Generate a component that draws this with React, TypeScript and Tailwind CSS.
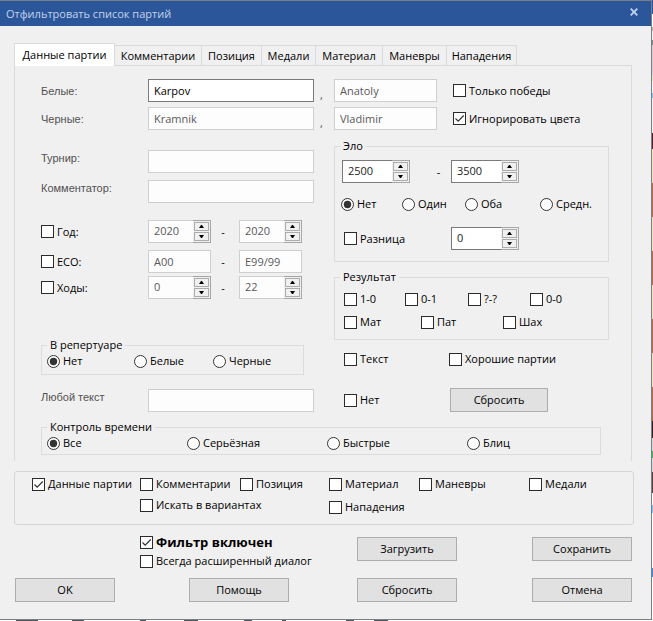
import type { ReactNode } from 'react';

interface CheckProps {
  label: string;
  checked?: boolean;
  bold?: boolean;
}

function Check({ label, checked, bold }: CheckProps) {
  return (
    <label className="flex items-center gap-[3px] h-[18px] whitespace-nowrap">
      <span className="grid shrink-0">
        <input
          type="checkbox"
          defaultChecked={ checked }
          className="peer col-start-1 row-start-1 appearance-none size-[13px] border border-[#2b2b2b] bg-white"
        />
        <svg viewBox="0 0 13 13" className="col-start-1 row-start-1 size-[13px] invisible peer-checked:visible pointer-events-none">
          <path d="M2.5 6.5 L5.2 9.2 L10.7 3.5" fill="none" stroke="#333" strokeWidth="1.2" />
        </svg>
      </span>
      <span className={ bold ? 'text-[13px] font-bold' : '' }>{ label }</span>
    </label>
  );
}

interface RadioProps {
  name: string;
  label: string;
  checked?: boolean;
}

function Radio({ name, label, checked }: RadioProps) {
  return (
    <label className="flex items-center gap-[3px] h-[18px] whitespace-nowrap">
      <span className="grid shrink-0">
        <input
          type="radio"
          name={ name }
          defaultChecked={ checked }
          className="peer col-start-1 row-start-1 appearance-none size-[13px] rounded-full border border-[#333] bg-white"
        />
        <svg viewBox="0 0 13 13" className="col-start-1 row-start-1 size-[13px] invisible peer-checked:visible pointer-events-none">
          <circle cx="6.5" cy="6.5" r="3.7" fill="#333" />
        </svg>
      </span>
      <span>{ label }</span>
    </label>
  );
}

interface FieldProps {
  id?: string;
  label?: string;
  value?: string;
  active?: boolean;
  className?: string;
}

function Field({ id, label, value = '', active, className = '' }: FieldProps) {
  return (
    <input
      id={ id }
      type="text"
      aria-label={ label }
      defaultValue={ value }
      className={ `h-[23px] min-w-0 border px-[5px] pb-px outline-none ${active ? 'border-[#7a7a7a] bg-white text-black' : 'border-[#cfcfcf] bg-[#fdfdfd] text-[#5a5a5a]'} ${className}` }
    />
  );
}

function Spinner({ label, value, active }: FieldProps) {
  return (
    <div className={ `flex h-[23px] ${active ? 'w-[68px]' : 'w-[63px]'}` }>
      <input
        type="text"
        aria-label={ label }
        defaultValue={ value }
        className={ `w-0 flex-1 border border-r-0 px-[5px] pb-px outline-none ${active ? 'border-[#7a7a7a] bg-white text-[#222]' : 'border-[#cfcfcf] bg-[#fdfdfd] text-[#5a5a5a]'}` }
      />
      <div className="flex flex-col w-[18px] gap-px p-px border-y border-r border-[#a6a6a6] bg-[#f0f0f0]">
        <button type="button" aria-label={ `${label} +` } className="flex-1 flex items-center justify-center border border-[#acacac] bg-[#f0f0f0]">
          <svg viewBox="0 0 5 3" className="w-[5px] h-[3px]"><path d="M0 3 L2 0 H3 L5 3 Z" /></svg>
        </button>
        <button type="button" aria-label={ `${label} -` } className="flex-1 flex items-center justify-center border border-[#acacac] bg-[#f0f0f0]">
          <svg viewBox="0 0 5 3" className="w-[5px] h-[3px]"><path d="M0 0 L2 3 H3 L5 0 Z" /></svg>
        </button>
      </div>
    </div>
  );
}

interface LabeledProps {
  id: string;
  label: string;
  value?: string;
  active?: boolean;
  top?: boolean;
}

function LabeledField({ id, label, value, active, top }: LabeledProps) {
  return (
    <div className={ `flex ${top ? 'items-start' : 'items-center'}` }>
      <label htmlFor={ id } className="w-[107px] shrink-0 leading-4 font-['Liberation_Sans',sans-serif] text-[#505050]">{ label }</label>
      <Field id={ id } value={ value } active={ active } className="flex-1" />
    </div>
  );
}

function Group({ title, className = '', children }: { title: string; className?: string; children: ReactNode }) {
  return (
    <fieldset className={ `min-w-0 border border-[#dcdcdc] px-[5px] ${className}` }>
      <legend className="h-[18px] leading-[18px] px-[3px]">{ title }</legend>
      { children }
    </fieldset>
  );
}

function Button({ className = 'w-[100px]', children }: { className?: string; children: ReactNode }) {
  return (
    <button type="button" className={ `h-6 border border-[#adadad] bg-[#e1e1e1] ${className}` }>{ children }</button>
  );
}

const tabs = [
  { title: 'Комментарии', width: 'w-[87px]' },
  { title: 'Позиция', width: 'w-[60px]' },
  { title: 'Медали', width: 'w-[54px]' },
  { title: 'Материал', width: 'w-[67px]' },
  { title: 'Маневры', width: 'w-16' },
  { title: 'Нападения', width: 'w-[70px]' },
];

// slivers of the main window that show beside the dialog
const sideStrip = [
  ['#2b579a', 14], ['#ffffff', 13], ['#c9b79f', 4], ['#f0f0f0', 9], ['#808080', 5],
  ['#d8ccd0', 30], ['#f0e0c8', 6], ['#f4f4f4', 12], ['#7cc4e8', 5], ['#f0f0f0', 35],
  ['#5a1a20', 16], ['#fbe0b4', 34], ['#b9683c', 34], ['#fbe0b4', 34], ['#b9683c', 34],
  ['#fbe0b4', 34], ['#b9683c', 34], ['#fbe0b4', 34], ['#b9683c', 34], ['#3a1c1c', 17],
  ['#d8d8d8', 13], ['#3fb34f', 7], ['#d8d8d8', 14], ['#5c4036', 21], ['#ffffff', 12],
  ['#7cbdf0', 8], ['#ffffff', 55], ['#3c8ad0', 9], ['#ffffff', 10],
] as const;

const bottomStrip = [16, 22, 34, 12, 56, 6, 38, 14, 46, 8, 30, 4, 60, 8, 20, 14] as const;

export default function App() {
  return (
    <div className="flex bg-white text-[11px] leading-4 text-black font-['Open_Sans','Noto_Sans',sans-serif]">
      <div className="flex-1 min-w-0">
        <form className="border-y border-r border-[#767f8c] bg-[#f0f0f0]">
          <header className="flex items-center justify-between h-[25px] pl-[6px] pr-[13px] bg-[#2b579a] text-[#c3d2ea]">
            <h1>Отфильтровать список партий</h1>
            <button type="button" aria-label="Закрыть" className="pb-1">
              <svg viewBox="0 0 8 8" className="size-2"><path d="M0.7 0.7 L7.3 7.3 M7.3 0.7 L0.7 7.3" stroke="currentColor" strokeWidth="1.8" /></svg>
            </button>
          </header>

          <div className="pt-[17px] pl-[14px] pr-[17px] pb-[17px]">
            <div role="tablist" className="flex items-end">
              <button type="button" role="tab" aria-selected="true" className="relative w-[101px] h-[23px] border border-b-0 border-[#dadada] bg-white">Данные партии</button>
              { tabs.map((tab) => (
                <button key={ tab.title } type="button" role="tab" aria-selected="false" className={ `${tab.width} h-[21px] border-t border-r border-[#dadada]` }>{ tab.title }</button>
              )) }
            </div>

            <div className="-mt-px mr-[2px] pt-[13px] pl-[26px] pr-[22px] pb-[6px] border border-b-0 border-[#dadada]">
              <div className="flex">
                <div className="flex-1 min-w-0">
                  <LabeledField id="white" label="Белые:" value="Karpov" active />
                  <div className="mt-[5px]"><LabeledField id="black" label="Черные:" value="Kramnik" /></div>
                  <div className="mt-5"><LabeledField id="tournament" label="Турнир:" top /></div>
                  <div className="mt-[7px]"><LabeledField id="annotator" label="Комментатор:" top /></div>

                  <div className="mt-[17px] grid grid-cols-[107px_63px_28px_63px] items-center">
                    <Check label="Год:" />
                    <Spinner label="Год от" value="2020" />
                    <span className="pr-1 text-center">-</span>
                    <Spinner label="Год до" value="2020" />
                  </div>
                  <div className="mt-[7px] grid grid-cols-[107px_63px_28px_63px] items-center">
                    <Check label="ECO:" />
                    <Field label="ECO от" value="A00" />
                    <span className="pr-1 text-center">-</span>
                    <Field label="ECO до" value="E99/99" />
                  </div>
                  <div className="mt-[3px] grid grid-cols-[107px_63px_28px_63px] items-center">
                    <Check label="Ходы:" />
                    <Spinner label="Ходы от" value="0" />
                    <span className="pr-1 text-center">-</span>
                    <Spinner label="Ходы до" value="22" />
                  </div>

                  <Group title="В репертуаре" className="mt-[37px] mr-[10px] pb-1">
                    <div className="relative -mt-[2px] grid grid-cols-[87px_79px_1fr] bg-[#f0f0f0]">
                      <Radio name="repertoire" label="Нет" checked />
                      <Radio name="repertoire" label="Белые" />
                      <Radio name="repertoire" label="Черные" />
                    </div>
                  </Group>
                  <div className="mt-[14px]"><LabeledField id="anytext" label="Любой текст" top /></div>
                </div>

                <div className="w-5 pt-2 pl-[6px] text-[#505050]">
                  <p className="h-7">,</p>
                  <p className="h-7">,</p>
                </div>

                <div className="w-[275px]">
                  <div className="flex items-center gap-4">
                    <Field label="Имя белых" value="Anatoly" className="w-[103px]" />
                    <Check label="Только победы" />
                  </div>
                  <div className="mt-[5px] flex items-center gap-4">
                    <Field label="Имя черных" value="Vladimir" className="w-[103px]" />
                    <Check label="Игнорировать цвета" checked />
                  </div>

                  <Group title="Эло" className="mt-[7px] pb-[11px]">
                    <div className="mt-[5px] ml-[2px] flex items-center">
                      <Spinner label="Эло от" value="2500" active />
                      <span className="w-[41px] pl-4 text-center">-</span>
                      <Spinner label="Эло до" value="3500" active />
                    </div>
                    <div className="mt-3 ml-px grid grid-cols-[61px_63px_75px_1fr]">
                      <Radio name="elo" label="Нет" checked />
                      <Radio name="elo" label="Один" />
                      <Radio name="elo" label="Оба" />
                      <Radio name="elo" label="Средн." />
                    </div>
                    <div className="mt-[14px] ml-1 grid grid-cols-[107px_1fr] items-center">
                      <Check label="Разница" />
                      <Spinner label="Разница Эло" value="0" active />
                    </div>
                  </Group>

                  <Group title="Результат" className="mt-[6px] pb-2">
                    <div className="mt-1 ml-1 grid grid-cols-[61px_63px_62px_1fr]">
                      <Check label="1-0" />
                      <Check label="0-1" />
                      <Check label="?-?" />
                      <Check label="0-0" />
                    </div>
                    <div className="mt-[5px] ml-1 grid grid-cols-[77px_82px_1fr]">
                      <Check label="Мат" />
                      <Check label="Пат" />
                      <Check label="Шах" />
                    </div>
                  </Group>

                  <div className="mt-[10px] ml-[10px] grid grid-cols-[105px_1fr]">
                    <Check label="Текст" />
                    <Check label="Хорошие партии" />
                  </div>
                  <div className="mt-5 ml-[10px] grid grid-cols-[106px_1fr] items-center">
                    <Check label="Нет" />
                    <Button className="w-[98px]">Сбросить</Button>
                  </div>
                </div>
              </div>

              <Group title="Контроль времени" className="mt-[6px] mr-2 pb-[2px]">
                <div className="relative -mt-[2px] grid grid-cols-[140px_140px_140px_1fr] bg-[#f0f0f0]">
                  <Radio name="time" label="Все" checked />
                  <Radio name="time" label="Серьёзная" />
                  <Radio name="time" label="Быстрые" />
                  <Radio name="time" label="Блиц" />
                </div>
              </Group>
            </div>

            <div className="mt-[10px] h-[54px] pt-[3px] pl-[17px] grid grid-cols-[108px_100px_89px_90px_110px_1fr] content-start gap-y-[3px] border border-[#d5d5d5] rounded-[3px]">
              <Check label="Данные партии" checked />
              <Check label="Комментарии" />
              <Check label="Позиция" />
              <Check label="Материал" />
              <Check label="Маневры" />
              <Check label="Медали" />
              <div className="col-start-2 col-span-2"><Check label="Искать в вариантах" /></div>
              <div className="pt-[2px]"><Check label="Нападения" /></div>
            </div>

            <div className="mt-2 pl-[126px] pr-[2px] flex items-start">
              <div className="w-[217px] flex flex-col gap-px">
                <Check label="Фильтр включен" checked bold />
                <Check label="Всегда расширенный диалог" />
              </div>
              <div className="mt-1 flex flex-1 justify-between">
                <Button>Загрузить</Button>
                <Button>Сохранить</Button>
              </div>
            </div>

            <div className="mt-2 pl-px pr-[2px] grid grid-cols-[174px_168px_1fr_100px]">
              <Button>OK</Button>
              <Button>Помощь</Button>
              <Button>Сбросить</Button>
              <Button>Отмена</Button>
            </div>
          </div>
        </form>
        <div className="flex h-px">
          { bottomStrip.map((width, i) => (
            <span key={ i } className={ i % 2 ? 'bg-[#555]' : 'bg-white' } style={ { width } } />
          )) }
        </div>
      </div>
      <div className="w-px">
        { sideStrip.map(([color, height], i) => (
          <div key={ i } style={ { height, backgroundColor: color } } />
        )) }
      </div>
    </div>
  );
}
